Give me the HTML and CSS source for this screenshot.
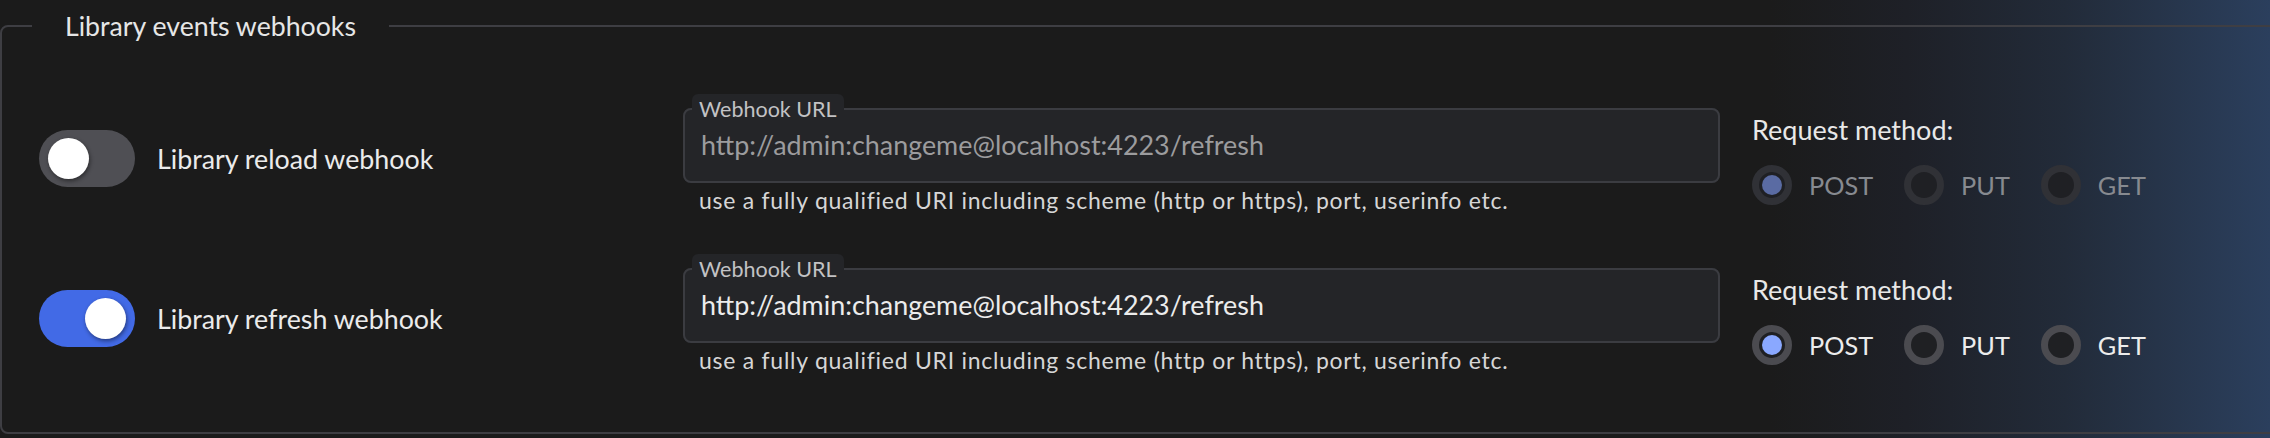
FILE: index.html
```html
<!DOCTYPE html>
<html lang="en">
<head>
<meta charset="utf-8">
<title>Library events webhooks</title>
<link rel="stylesheet" href="styles.css">
</head>
<body>
<fieldset class="group">
  <legend class="group-title">Library events webhooks</legend>
  <div class="hooks">
    <div class="hook-row">
      <div class="switch-cell">
        <span class="switch"><span class="knob"></span></span>
        <span class="switch-label">Library reload webhook</span>
      </div>
      <div class="url-cell">
        <fieldset class="url-box">
          <legend class="url-tab">Webhook URL</legend>
          <input class="url-input" type="text" value="http://admin:changeme@localhost:4223/refresh" disabled>
        </fieldset>
        <p class="url-help">use a fully qualified URI including scheme (http or https), port, userinfo etc.</p>
      </div>
      <div class="method-cell is-disabled">
        <div class="method-title">Request method:</div>
        <div class="radios">
          <span class="radio-item"><span class="radio checked"><span class="dot"></span></span><span class="radio-text">POST</span></span>
          <span class="radio-item"><span class="radio"></span><span class="radio-text">PUT</span></span>
          <span class="radio-item"><span class="radio"></span><span class="radio-text">GET</span></span>
        </div>
      </div>
    </div>
    <div class="hook-row">
      <div class="switch-cell">
        <span class="switch on"><span class="knob"></span></span>
        <span class="switch-label">Library refresh webhook</span>
      </div>
      <div class="url-cell">
        <fieldset class="url-box">
          <legend class="url-tab">Webhook URL</legend>
          <input class="url-input" type="text" value="http://admin:changeme@localhost:4223/refresh">
        </fieldset>
        <p class="url-help">use a fully qualified URI including scheme (http or https), port, userinfo etc.</p>
      </div>
      <div class="method-cell">
        <div class="method-title">Request method:</div>
        <div class="radios">
          <span class="radio-item"><span class="radio checked"><span class="dot"></span></span><span class="radio-text">POST</span></span>
          <span class="radio-item"><span class="radio"></span><span class="radio-text">PUT</span></span>
          <span class="radio-item"><span class="radio"></span><span class="radio-text">GET</span></span>
        </div>
      </div>
    </div>
  </div>
</fieldset>
</body>
</html>
```
FILE: styles.css
```css
html {
  background: #1b1b1b;
}
body {
  margin: 0;
  height: 438px;
  overflow: hidden;
  font-family: Lato, "Noto Sans", sans-serif;
  color: #e8e8e8;
  background: linear-gradient(90deg, #1b1b1b 0%, #1b1b1b 78%, #1e2027 84%, #222b39 91%, #2b3f5d 100%);
}
.group {
  margin: 10px -40px 0 0;
  padding: 52px 0 57px 37px;
  border: 2px solid #3e3e43;
  border-radius: 8px;
  min-width: 0;
}
.group-title {
  margin-left: -7px;
  padding: 0 33px;
  font-size: 26.7px;
  line-height: 32px;
  color: #e6e6e6;
}
.hooks {
  display: flex;
  flex-direction: column;
  gap: 39px;
}
.hook-row {
  display: grid;
  grid-template-columns: 612px 1037px 1fr;
  column-gap: 32px;
  align-items: start;
}
.switch-cell {
  display: flex;
  align-items: center;
  gap: 22px;
  margin-top: 36px;
}
.switch {
  box-sizing: border-box;
  width: 96px;
  height: 57px;
  border-radius: 29px;
  background: #4f4f54;
  display: flex;
  align-items: center;
  justify-content: flex-start;
  padding: 0 9px;
}
.switch.on {
  background: #426ae6;
  justify-content: flex-end;
}
.knob {
  width: 41px;
  height: 41px;
  border-radius: 50%;
  background: #ffffff;
  box-shadow: 1px 2px 4px rgba(0, 0, 0, 0.45);
}
.switch-label {
  font-size: 26.8px;
  line-height: 34px;
  color: #ebebeb;
}
.url-cell {
  display: flex;
  flex-direction: column;
}
.url-box {
  margin: 0;
  padding: 5px 16px 20px;
  border: 2px solid #3b3c41;
  border-radius: 8px;
  background: #242528;
  min-width: 0;
}
.url-tab {
  margin-left: -9px;
  padding: 0 7px;
  background: #242528;
  border-radius: 6px 6px 0 0;
  font-size: 21.5px;
  line-height: 30px;
  color: #c2c2c4;
}
.url-input {
  display: block;
  width: 100%;
  box-sizing: border-box;
  margin: 0;
  padding: 0;
  border: none;
  outline: none;
  background: transparent;
  font-family: inherit;
  font-size: 26.9px;
  line-height: 32px;
  height: 32px;
  color: #ececec;
}
.url-input:disabled {
  color: #9c9c9e;
}
.url-help {
  margin: 3px 0 0 16px;
  font-size: 23px;
  line-height: 29px;
  letter-spacing: 0.74px;
  color: #d6d6d6;
}
.method-cell {
  margin-top: 19px;
}
.method-title {
  font-size: 27px;
  line-height: 34px;
  color: #e8e8e8;
}
.radios {
  display: flex;
  align-items: center;
  gap: 31px;
  margin-top: 18px;
}
.radio-item {
  display: flex;
  align-items: center;
  gap: 17px;
}
.radio {
  box-sizing: border-box;
  width: 40px;
  height: 40px;
  border-radius: 50%;
  border: 7px solid #4b4b50;
  background: #1f2023;
  display: flex;
  align-items: center;
  justify-content: center;
}
.dot {
  width: 20px;
  height: 20px;
  border-radius: 50%;
  background: #8aa8ff;
}
.radio-text {
  font-size: 25.3px;
  line-height: 34px;
  color: #ececec;
}
.is-disabled .radio {
  border-color: #303136;
  background: #1f2024;
}
.is-disabled .dot {
  background: #5a6ba3;
}
.is-disabled .radio-text {
  color: #878a90;
}
```
